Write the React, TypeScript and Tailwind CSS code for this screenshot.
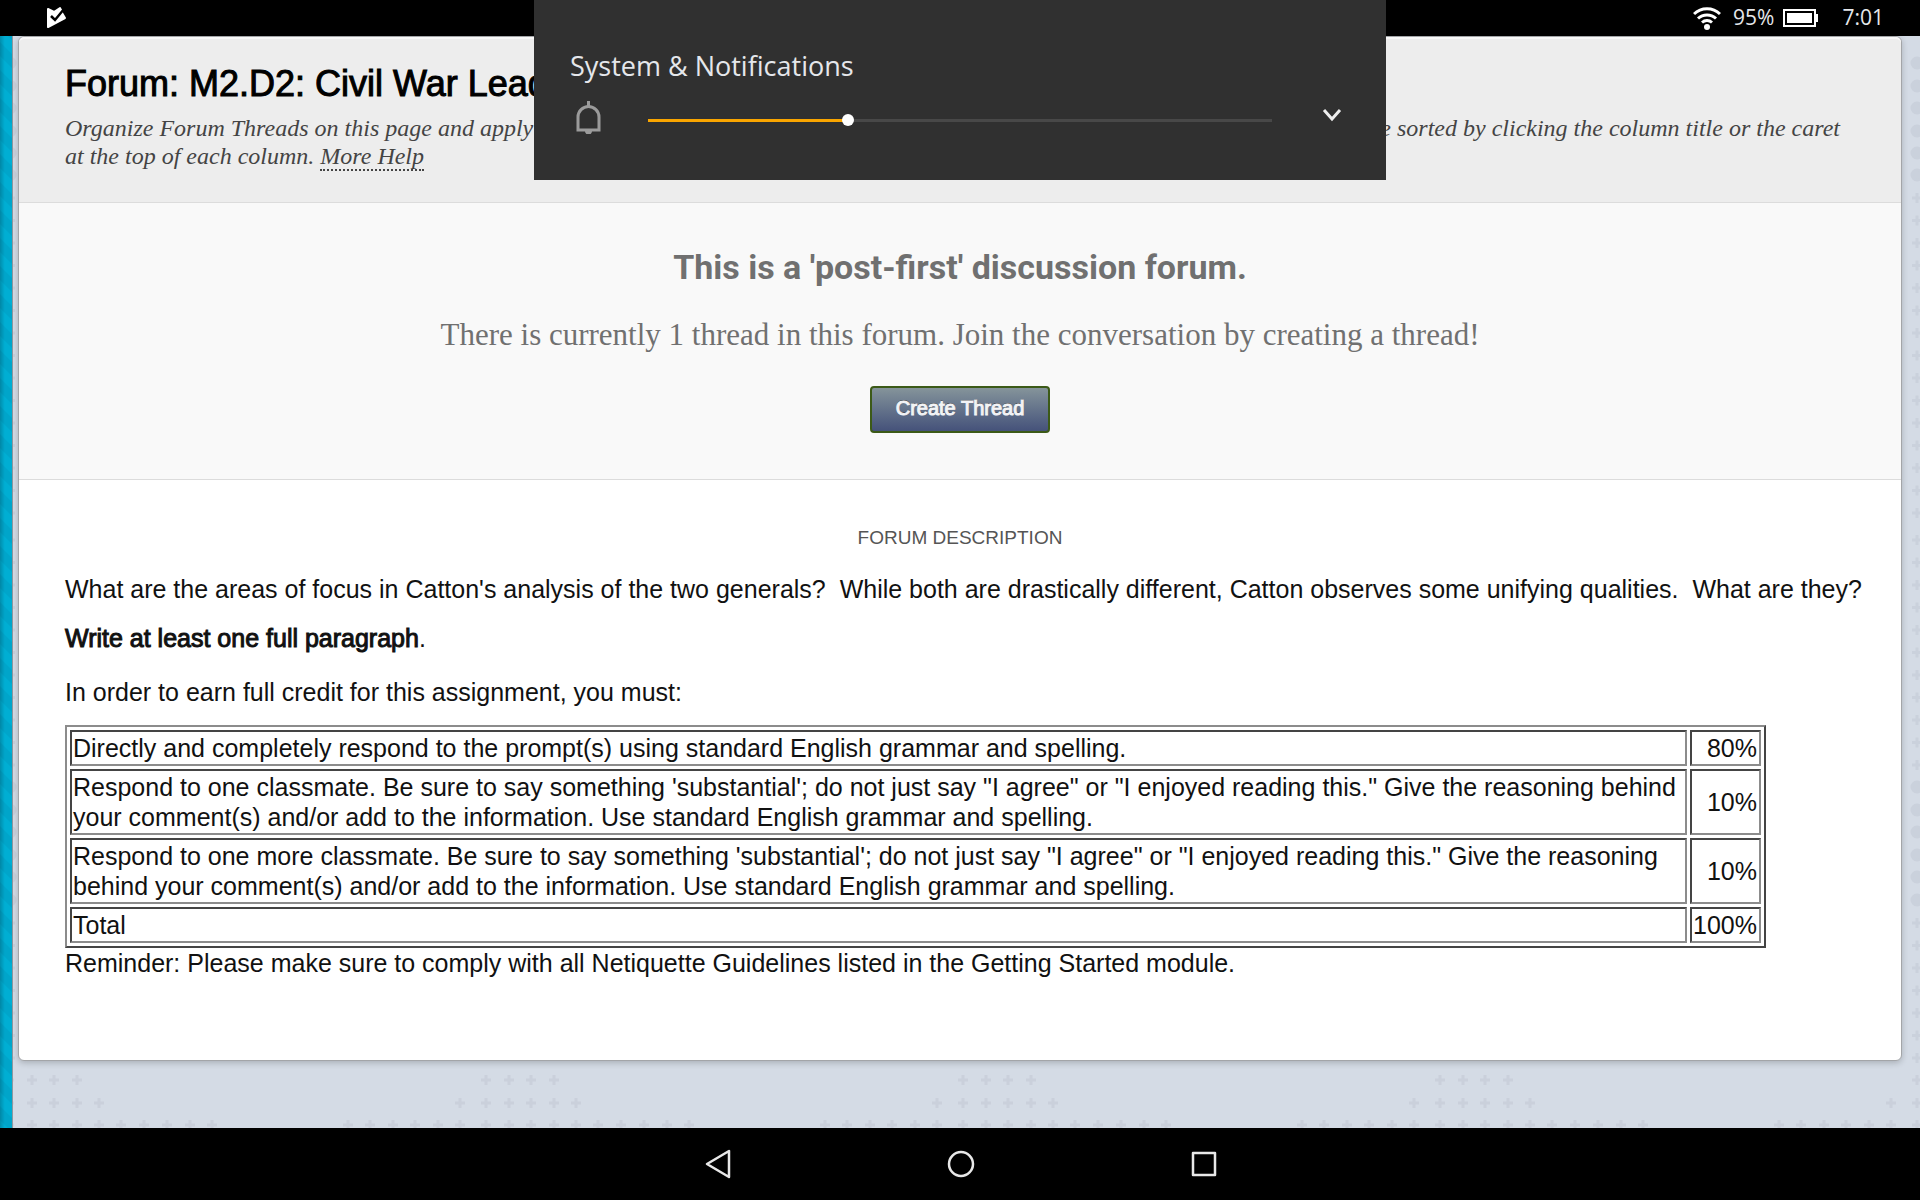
import { useState } from "react"

const rubric = [
  {
    task: "Directly and completely respond to the prompt(s) using standard English grammar and spelling.",
    worth: "80%",
  },
  {
    task: "Respond to one classmate. Be sure to say something 'substantial'; do not just say \"I agree\" or \"I enjoyed reading this.\" Give the reasoning behind your comment(s) and/or add to the information. Use standard English grammar and spelling.",
    worth: "10%",
  },
  {
    task: "Respond to one more classmate. Be sure to say something 'substantial'; do not just say \"I agree\" or \"I enjoyed reading this.\" Give the reasoning behind your comment(s) and/or add to the information. Use standard English grammar and spelling.",
    worth: "10%",
  },
  { task: "Total", worth: "100%" },
]

// x centres of the plus marks in one repeat of the wallpaper, row by row
const plusRows = [
  { y: 23, xs: [146, 169, 191, 214] },
  { y: 46, xs: [120, 146, 169, 191, 214, 236] },
  { y: 68, xs: [8, 30, 53, 75, 98, 120, 146, 169, 191, 214, 236, 258, 281, 304, 327, 349] },
]

const plusColumn = Array.from({ length: 15 }, (_, i) => 198 + i * 22.5).concat(
  Array.from({ length: 11 }, (_, i) => 540 + i * 22.5),
  Array.from({ length: 7 }, (_, i) => 923 + i * 22.5)
)
const dotColumn = [63, 86, 108, 131, 153, 175, 787, 810, 832, 855, 877, 900]

function Wallpaper() {
  return (
    <svg className="absolute inset-0 h-full w-full" aria-hidden="true">
      <defs>
        <pattern id="stripes" width="28" height="28" patternUnits="userSpaceOnUse">
          <rect width="28" height="28" fill="#00a5ca" />
          <path d="M0 0L28 28V42L0 14Z M0 -28L28 0V14L0 -14Z" fill="#00aed3" />
        </pattern>
        <pattern id="plus" x="340" y="1057" width="477" height="90" patternUnits="userSpaceOnUse">
          {plusRows.map((row) =>
            row.xs.map((x) => (
              <path key={`${x}-${row.y}`} d={`M${x - 5} ${row.y}h10M${x} ${row.y - 5}v10`} stroke="#cad0db" strokeWidth="3" />
            ))
          )}
        </pattern>
        <linearGradient id="edge">
          <stop offset="0" stopColor="#000" stopOpacity="0.18" />
          <stop offset="0.4" stopColor="#000" stopOpacity="0" />
        </linearGradient>
      </defs>
      <rect y="1064" width="100%" height="76" fill="url(#plus)" />
      {[10, 1917].map((x) => (
        <g key={x} stroke="#cad1dc" strokeWidth="3" fill="#cad1dc">
          {plusColumn.map((y) => (
            <path key={y} d={`M${x - 5} ${y}h10M${x} ${y - 5}v10`} />
          ))}
          {dotColumn.map((y) => (
            <circle key={y} cx={x} cy={y} r="5" />
          ))}
        </g>
      ))}
      <rect width="12" height="100%" fill="url(#stripes)" />
      <rect width="12" height="100%" fill="url(#edge)" />
      <path d="M12.500 0V1200" stroke="#8f979f" />
    </svg>
  )
}

function StatusBar() {
  return (
    <header className="relative flex h-9 items-center justify-between bg-black px-9 font-['Open_Sans',sans-serif] text-[21px] text-gray-200">
      <svg className="ml-2 h-6 w-6" viewBox="0 0 24 24" aria-hidden="true">
        <path d="M4 3L10 6L16 2L18 7L21 12L4 21Z" fill="#fff" stroke="#fff" strokeWidth="2" strokeLinejoin="round" />
        <path d="M7 10l4 4 9-11" fill="none" stroke="#000" strokeWidth="2.500" />
        <path d="M9 7l2 2 6-6.500" fill="none" stroke="#fff" strokeWidth="2.500" />
      </svg>
      <div className="flex items-center">
        <svg className="mr-3 h-7 w-7" viewBox="0 0 28 28" fill="none" stroke="#fff" strokeWidth="3" aria-hidden="true">
          <path d="M1 10a18.500 18.500 0 0 1 26 0M5 14.500a13 13 0 0 1 18 0M9 18.500a7.500 7.500 0 0 1 10 0" />
          <circle cx="14" cy="23" r="3" fill="#fff" stroke="none" />
        </svg>
        <span>95%</span>
        <svg className="ml-2 h-6 w-9" viewBox="0 0 36 24" aria-hidden="true">
          <path d="M2 4h31v16h-31z" fill="none" stroke="#fff" strokeWidth="2" />
          <path d="M5 7h25v10h-25zM33 8h3v8h-3z" fill="#fff" />
        </svg>
        <time className="ml-6">7:01</time>
      </div>
    </header>
  )
}

function QuickSettings() {
  const [volume, setVolume] = useState(32)

  return (
    <section className="absolute top-0 left-1/2 z-10 h-[180px] w-[852px] -translate-x-1/2 bg-[#303030] px-9 pt-12 font-['Open_Sans',sans-serif]">
      <h2 className="text-[27px] leading-9 text-gray-200">System &amp; Notifications</h2>
      <div className="mt-3 flex h-9 items-center">
        <svg className="ml-1 h-10 w-8" viewBox="0 0 32 40" fill="none" stroke="#9b9b9b" strokeWidth="3" aria-hidden="true">
          <path d="M4 36V23a10.500 10.500 0 0 1 21 0V36zM14.500 7v6" />
          <path d="M11 37h7a3.500 3.500 0 0 1 -7 0z" fill="#9b9b9b" stroke="none" />
        </svg>
        <div className="relative mt-3 ml-[42px] flex h-3 w-[624px] items-center">
          <div className="h-[3px] bg-[#f9a500]" style={{ width: `${volume}%` }} />
          <div className="h-[3px] flex-1 bg-[#484848]" />
          <div className="absolute size-3 -translate-x-1/2 rounded-full bg-white" style={{ left: `${volume}%` }} />
          <input
            type="range"
            aria-label="Notification volume"
            value={volume}
            onChange={(e) => setVolume(Number(e.target.value))}
            className="absolute inset-0 w-full opacity-0"
          />
        </div>
        <button aria-label="Expand" className="ml-auto">
          <svg className="h-9 w-9" viewBox="0 0 36 36" fill="none" stroke="#eee" strokeWidth="3">
            <path d="M10 14l8 9 8-9" />
          </svg>
        </button>
      </div>
    </section>
  )
}

function NavBar() {
  return (
    <nav className="relative flex h-[72px] items-center justify-center gap-[203px] bg-black">
      <button aria-label="Back">
        <svg className="size-10" viewBox="0 0 40 40" fill="none" stroke="#e8e8e8" strokeWidth="2.500" strokeLinejoin="round">
          <path d="M32 7V33L10 20Z" />
        </svg>
      </button>
      <button aria-label="Home">
        <svg className="size-10" viewBox="0 0 40 40" fill="none" stroke="#e8e8e8" strokeWidth="2.500">
          <circle cx="21" cy="20" r="12" />
        </svg>
      </button>
      <button aria-label="Recent apps">
        <svg className="size-10" viewBox="0 0 40 40" fill="none" stroke="#e8e8e8" strokeWidth="2.500" strokeLinejoin="round">
          <path d="M10 9h22v22h-22z" />
        </svg>
      </button>
    </nav>
  )
}

export default function App() {
  return (
    <div className="relative flex min-h-screen flex-col bg-[#d4dbe5] font-['Liberation_Sans',sans-serif] text-[#111]">
      <Wallpaper />
      <StatusBar />
      <QuickSettings />

      <main className="relative mx-[18px] mb-auto rounded-md border border-[#a3a5a8] bg-white text-[25px] leading-[30px] shadow-[0_2px_6px_rgba(0,0,0,0.2)]">
        <div className="rounded-t-md border-t-2 border-b border-t-[#f8f8f8] border-b-[#dcdcdc] bg-[#ededed] pt-[23px] pr-[50px] pb-8 pl-[46px]">
          <h1 className="text-4xl leading-[44px] text-black [-webkit-text-stroke:1px]">Forum: M2.D2: Civil War Leaders</h1>
          <p className="mt-2 font-['Liberation_Serif',serif] text-2xl leading-7 text-[#444] italic">
            Organize Forum Threads on this page and apply settings to several or all threads. Threads are shown in a tabular format. Threads can be sorted by clicking the column title or the caret at the top of each column.{" "}
            <a href="#help" className="border-b-2 border-dotted border-[#444]">More Help</a>
          </p>
        </div>

        <div className="flex flex-col items-center border-b border-[#dcdcdc] bg-[#f9f9f9] pt-11 pb-[46px] text-[#707070]">
          <h2 className="font-[Roboto,sans-serif] text-[34px] leading-10 font-bold">This is a 'post-first' discussion forum.</h2>
          <p className="mt-7 font-['Liberation_Serif',serif] text-[31px] leading-10">
            There is currently 1 thread in this forum. Join the conversation by creating a thread!
          </p>
          <button className="mt-[31px] h-[47px] rounded border-2 border-[#3c5a17] bg-linear-to-b from-[#85949a] to-[#45527a] px-6 pb-1 text-xl text-gray-100 text-shadow-[0_-1px_0_#333] [-webkit-text-stroke:1px]">
            Create Thread
          </button>
        </div>

        <div className="px-[46px] pt-11 pb-[82px]">
          <h3 className="text-center text-[19px] leading-7 text-[#555]">FORUM DESCRIPTION</h3>
          <p className="-mr-5 mt-[22px]">
            What are the areas of focus in Catton's analysis of the two generals?&nbsp; While both are drastically different, Catton observes some unifying qualities.&nbsp; What are they?
          </p>
          <p className="mt-[19px]">
            <strong className="font-normal [-webkit-text-stroke:1px]">Write at least one full paragraph</strong>.
          </p>
          <p className="mt-6">In order to earn full credit for this assignment, you must:</p>
          <table className="mt-[18px] w-[1701px] max-w-full border-separate border-spacing-[3px] border-2 border-[#8c8c8c] border-r-[#444] border-b-[#444]">
            <tbody>
              {rubric.map((row) => (
                <tr key={row.task}>
                  <td className="border-2 border-[#8c8c8c] border-t-[#444] border-l-[#444] p-px">{row.task}</td>
                  <td className="border-2 border-[#8c8c8c] border-t-[#444] border-l-[#444] p-px pr-0.5 text-right">{row.worth}</td>
                </tr>
              ))}
            </tbody>
          </table>
          <p>Reminder: Please make sure to comply with all Netiquette Guidelines listed in the Getting Started module.</p>
        </div>
      </main>

      <NavBar />
    </div>
  )
}
